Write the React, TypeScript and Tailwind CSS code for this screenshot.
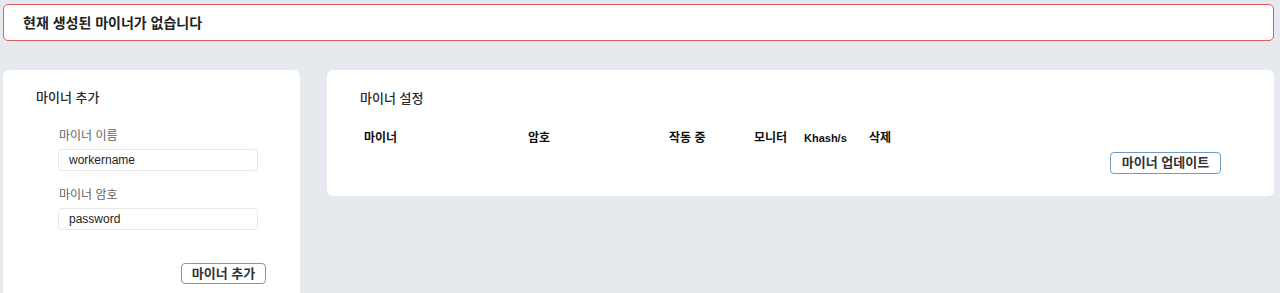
const font = { fontFamily: '"Liberation Sans", "Noto Sans CJK KR", sans-serif' };

const columns = [
    { name: "마이너", width: "w-[164px]" },
    { name: "암호", width: "w-[141px]" },
    { name: "작동 중", width: "w-[85px]" },
    { name: "모니터", width: "w-[50px]" },
    { name: "Khash/s", width: "w-[65px]" },
    { name: "삭제", width: "w-[60px]" }
];

const Field = ({ label, value, first }: { label: string; value: string; first?: boolean }) => {
    return (
        <div className={first ? "mt-[22px]" : "mt-[16px]"}>
            <div className="h-[16px] leading-[16px] text-[12px] text-[#5f5f5f] pl-[1px]">{label}</div>
            <input
                readOnly
                value={value}
                className="mt-[5px] block w-[200px] h-[22px] rounded-[4px] border border-[#e6e8eb] bg-white px-[10px] text-[12px] text-[#222] outline-none"
                style={font}
            />
        </div>
    );
};

export default function App() {
    return (
        <div className="h-[293px] bg-[#e6eaef] pl-[3px] pr-[6px] pt-[4px] overflow-hidden" style={font}>
            <div className="h-[37px] rounded-[5px] border border-[#de5b60] bg-white flex items-center pl-[19px]">
                <span className="text-[14px] font-bold text-[#222] leading-[16px]">현재 생성된 마이너가 없습니다</span>
            </div>

            <div className="mt-[29px] flex items-start gap-[27px]">
                <div className="w-[297px] h-[240px] shrink-0 rounded-[6px] bg-white pt-[20px] pl-[33px]">
                    <div className="h-[16px] leading-[16px] text-[13px] font-medium text-[#2b2b2b]">마이너 추가</div>
                    <div className="ml-[22px]">
                        <Field label="마이너 이름" value="workername" first />
                        <Field label="마이너 암호" value="password" />
                        <button className="mt-[33px] ml-[123px] w-[85px] h-[21px] rounded-[4px] border border-[#6f9cc4] bg-white text-[13px] font-bold text-[#333] leading-[19px]">
                            마이너 추가
                        </button>
                    </div>
                </div>

                <div className="flex-1 rounded-[6px] bg-white pt-[21px] pl-[33px] pr-[53px] pb-[22px]">
                    <div className="h-[16px] leading-[16px] text-[13px] font-medium text-[#2b2b2b]">마이너 설정</div>
                    <div className="mt-[23px] flex h-[16px] items-center">
                        {columns.map((col) => (
                            <div key={col.name} className={`${col.width} pl-[4px] ${col.name === "Khash/s" ? "text-[11px]" : "text-[12px]"} font-bold text-[#111] leading-[16px]`}>
                                {col.name}
                            </div>
                        ))}
                    </div>
                    <div className="mt-[6px] flex justify-end">
                        <button className="w-[111px] h-[22px] rounded-[4px] border border-[#6f9cc4] bg-white text-[13px] font-bold text-[#333] leading-[20px]">
                            마이너 업데이트
                        </button>
                    </div>
                </div>
            </div>
        </div>
    );
}
